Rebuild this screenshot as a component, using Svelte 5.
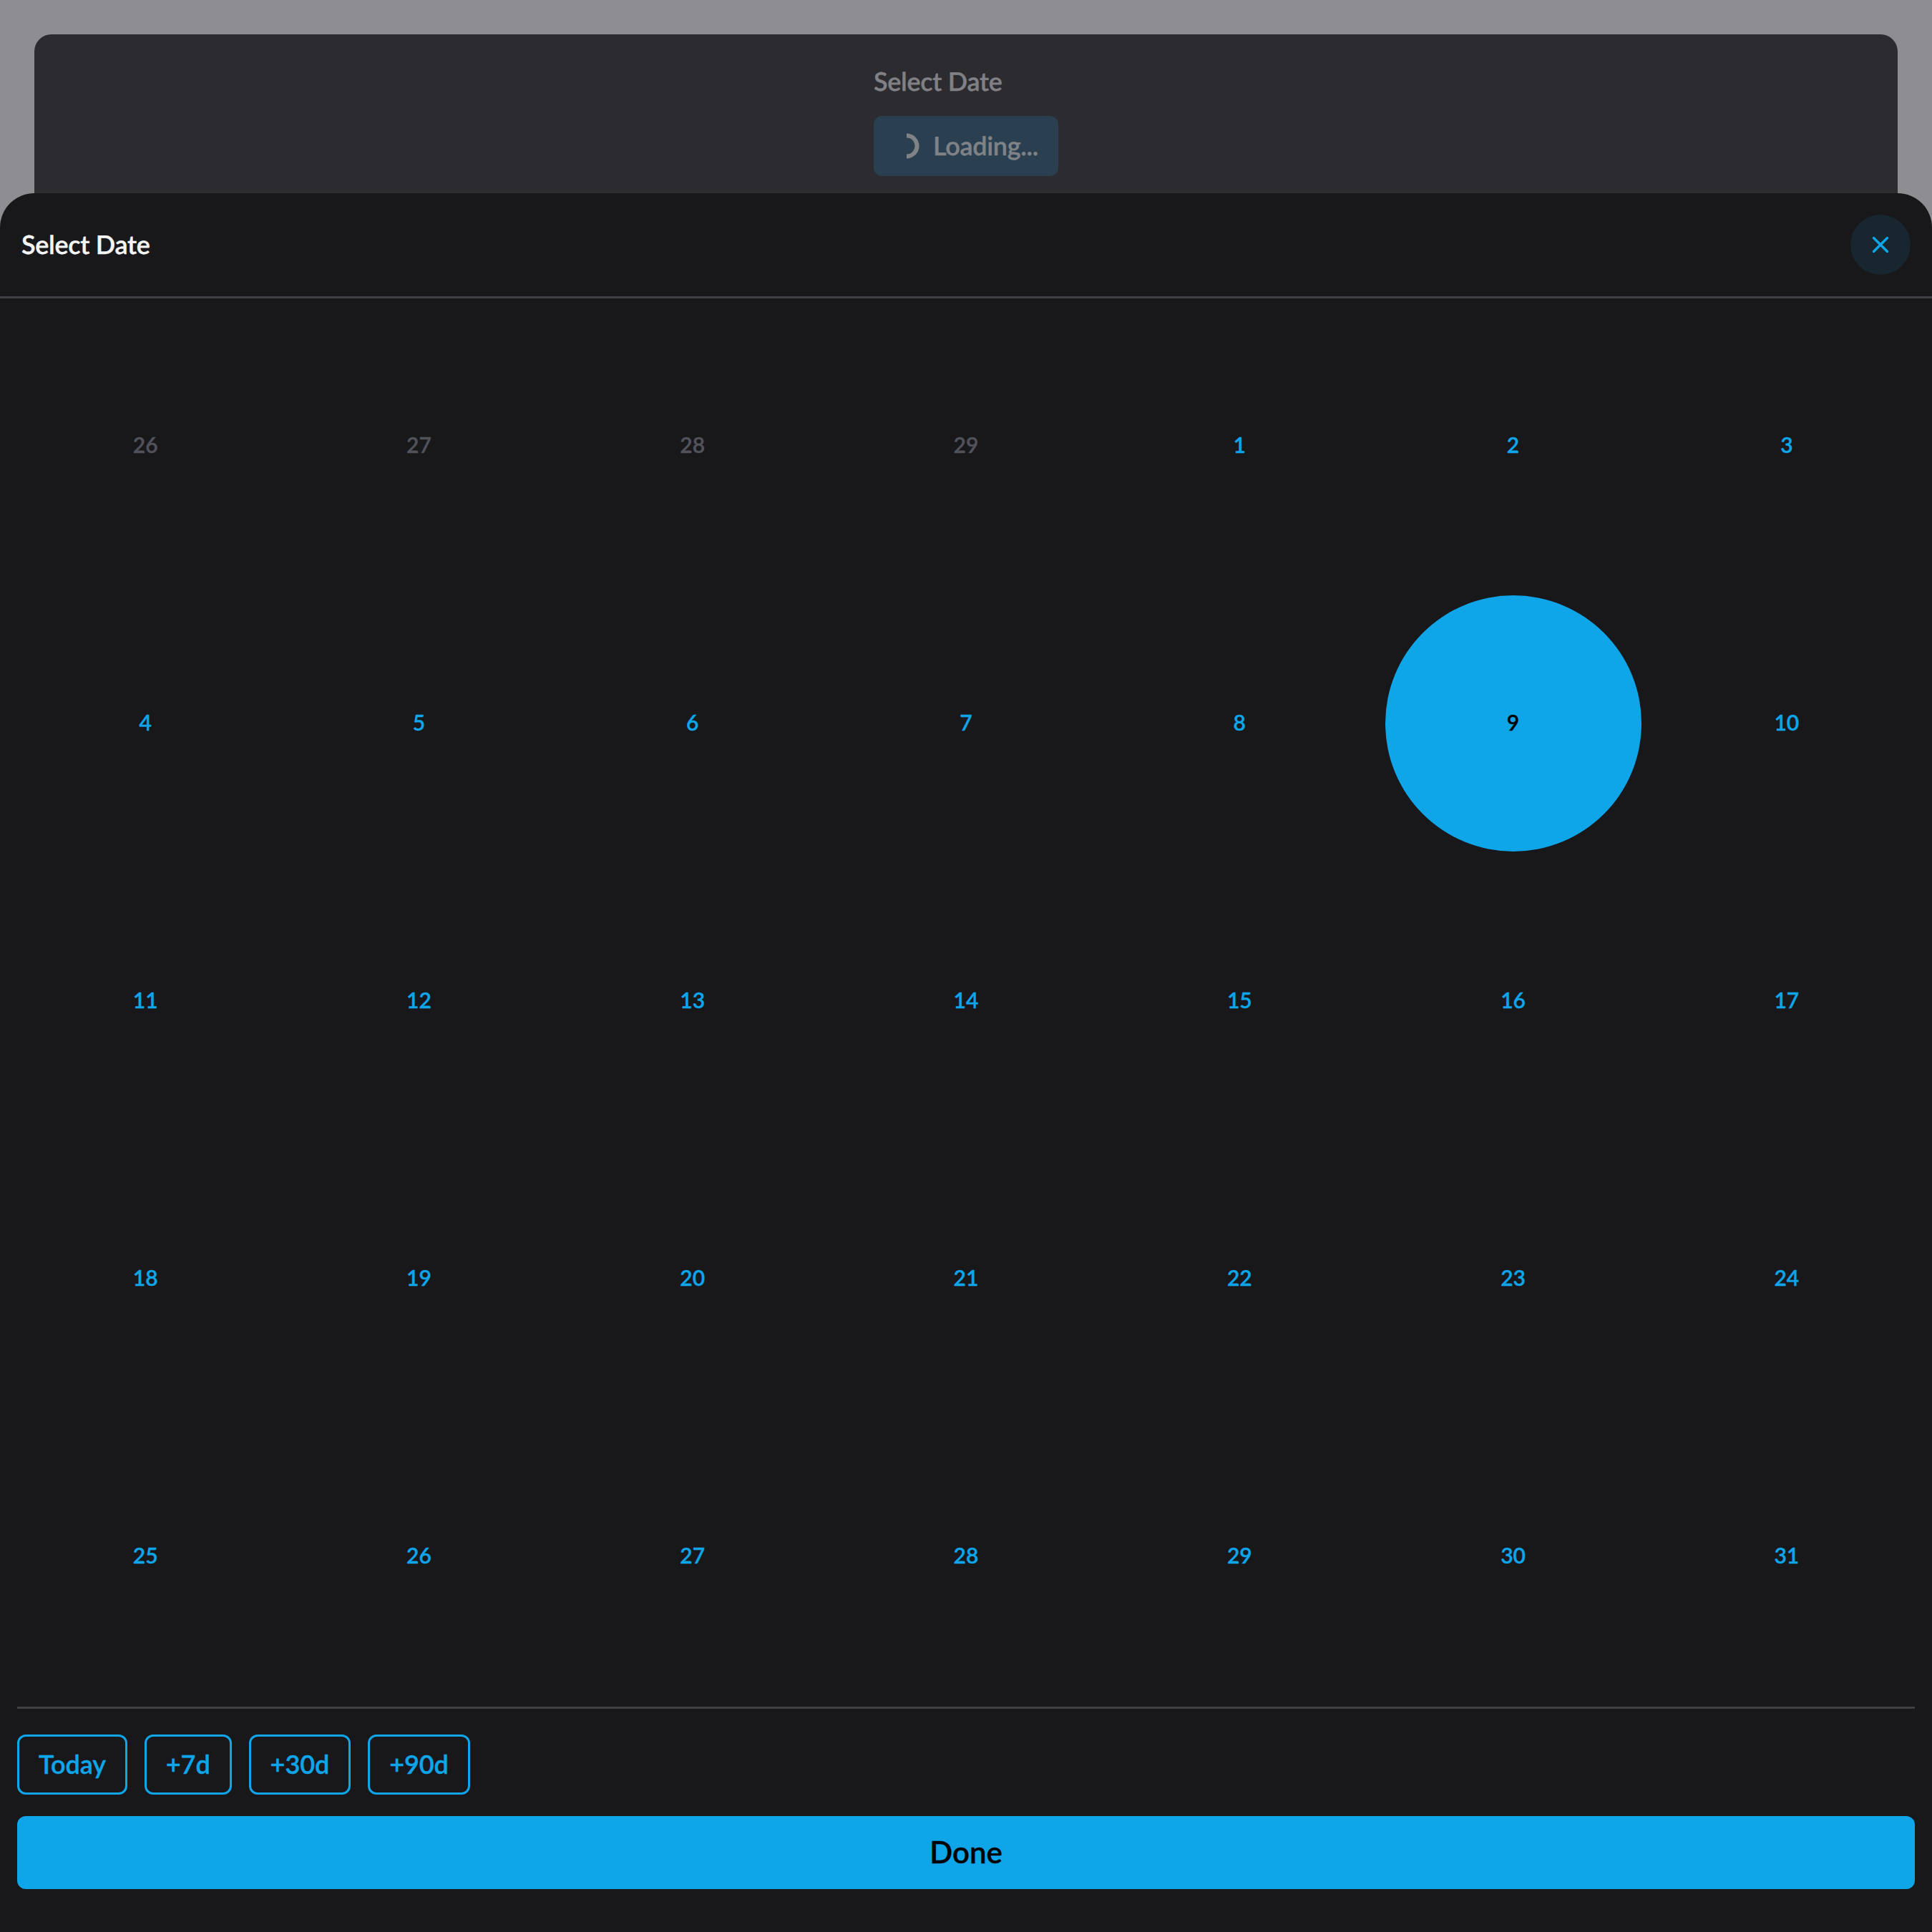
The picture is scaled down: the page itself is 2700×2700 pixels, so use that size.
<script>
	const days = [
		{ n: 26, muted: true }, { n: 27, muted: true }, { n: 28, muted: true }, { n: 29, muted: true },
		...Array.from({ length: 31 }, (_, i) => ({ n: i + 1, muted: false }))
	];
	const quick = ['Today', '+7d', '+30d', '+90d'];
	let selected = 9;
</script>

<div class="page">
	<div class="card">
		<div class="field">
			<div class="field-label">Select Date</div>
			<div class="loading">
				<svg class="spinner" viewBox="0 0 36 36" width="36" height="36" aria-hidden="true">
					<path d="M18 3.500a14.500 14.500 0 0 1 0 29" fill="none" stroke="currentColor" stroke-width="6" />
				</svg>
				<span>Loading...</span>
			</div>
		</div>
	</div>

	<div class="sheet">
		<header class="sheet-head">
			<h2>Select Date</h2>
			<button class="close" aria-label="Close">
				<svg viewBox="0 0 24 24" width="24" height="24" aria-hidden="true">
					<path d="M2.500 2.500l19 19M21.500 2.500l-19 19" fill="none" stroke="currentColor" stroke-width="3.500" stroke-linecap="round" />
				</svg>
			</button>
		</header>

		<div class="calendar">
			{#each days as d}
				<button class="day" class:muted={d.muted} class:selected={!d.muted && d.n === selected}><span>{d.n}</span></button>
			{/each}
		</div>

		<footer class="sheet-foot">
			<div class="quick">
				{#each quick as q}
					<button class="chip">{q}</button>
				{/each}
			</div>
			<button class="done">Done</button>
		</footer>
	</div>
</div>

<style>
	:global(body) {
		margin: 0;
		background: #8e8d92;
		font-family: Lato, sans-serif;
		text-rendering: geometricPrecision;
		-webkit-text-stroke: 0.4px currentColor;
	}

	button {
		font-family: inherit;
		background: none;
		border: none;
		padding: 0;
	}

	.page {
		position: relative;
		height: 2700px;
		overflow: hidden;
		padding: 48px 48px 0;
		box-sizing: border-box;
		background: #8e8d92;
	}

	.card {
		background: #2b2b30;
		border-radius: 24px;
		height: 400px;
		display: flex;
		justify-content: center;
		padding-top: 42px;
		box-sizing: border-box;
	}

	.field {
		width: 258px;
	}

	.field-label {
		color: #808085;
		font-size: 36px;
		font-weight: 600;
		letter-spacing: -0.3px;
		line-height: 46px;
		margin-bottom: 26px;
	}

	.loading {
		height: 84px;
		border-radius: 12px;
		background: #2a4050;
		color: #7f8387;
		display: flex;
		align-items: center;
		justify-content: center;
		gap: 19px;
		font-size: 36px;
		font-weight: 600;
		letter-spacing: -0.3px;
	}

	.loading span {
		padding-bottom: 3px;
	}

	.spinner {
		flex: none;
	}

	.sheet {
		position: absolute;
		left: 0;
		right: 0;
		top: 270px;
		bottom: 0;
		background: #18181b;
		border-radius: 48px 48px 0 0;
		display: flex;
		flex-direction: column;
	}

	.sheet-head {
		height: 147px;
		box-sizing: border-box;
		border-bottom: 3px solid #3f3f46;
		display: flex;
		align-items: center;
		justify-content: space-between;
		padding: 0 30px;
	}

	h2 {
		margin: 0;
		padding-bottom: 3px;
		color: #f4f4f5;
		font-size: 36px;
		font-weight: 600;
		letter-spacing: -0.3px;
	}

	.close {
		width: 84px;
		height: 84px;
		border-radius: 50%;
		background: #18262f;
		color: #0ea5e9;
		display: flex;
		align-items: center;
		justify-content: center;
	}

	.calendar {
		display: grid;
		grid-template-columns: repeat(7, 1fr);
		grid-auto-rows: 388px;
		padding: 12px 12px 0;
		flex: 1;
	}

	.day {
		width: 358px;
		height: 358px;
		place-self: center;
		border-radius: 50%;
		color: #0ea5e9;
		font-size: 30px;
		font-weight: 600;
	}

	.day span {
		display: block;
		padding-bottom: 4px;
	}

	.day.muted {
		color: #52525b;
	}

	.day.selected {
		background: #0ea5e9;
		color: #000;
	}

	.sheet-foot {
		margin: 0 24px;
		padding: 36px 0 60px;
		border-top: 3px solid #3f3f46;
		display: flex;
		flex-direction: column;
		gap: 30px;
	}

	.quick {
		display: flex;
		gap: 24px;
	}

	.chip {
		height: 84px;
		padding: 0 27px 3px;
		border: 3px solid #0ea5e9;
		border-radius: 12px;
		color: #0ea5e9;
		font-size: 36px;
		font-weight: 600;
		letter-spacing: -0.1px;
	}

	.done {
		height: 102px;
		border-radius: 12px;
		background: #0ea5e9;
		color: #000;
		font-size: 42px;
		font-weight: 600;
		padding-bottom: 3px;
	}
</style>
